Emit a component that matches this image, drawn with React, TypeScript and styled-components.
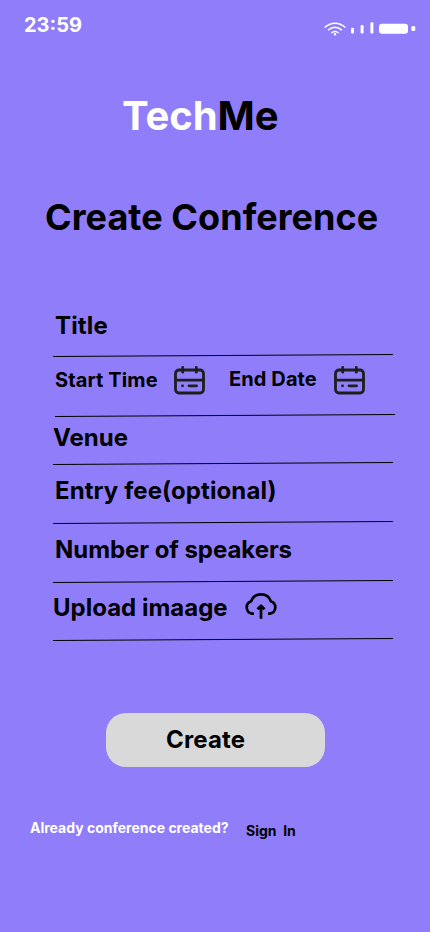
import React from "react";
import styled, { createGlobalStyle } from "styled-components";

const GlobalStyle = createGlobalStyle`
  * { box-sizing: border-box; }
  body { margin: 0; background: #907df9; }
`;

const Screen = styled.main`
  display: flex;
  flex-direction: column;
  width: 430px;
  height: 932px;
  overflow: hidden;
  background: #907df9;
  color: #000;
  font-family: Inter, "Liberation Sans", sans-serif;
  font-weight: 700;
`;

const StatusBar = styled.header`
  display: flex;
  justify-content: space-between;
  align-items: flex-start;
  height: 91px;
  padding: 13px 14px 0 24px;
  color: #fff;
`;

const Clock = styled.time`
  font-size: 20px;
  line-height: 24px;
`;

const StatusIcons = styled.svg`
  width: 92px;
  height: 14px;
  margin-top: 9px;
  fill: #fff;
`;

const Logo = styled.div`
  height: 100px;
  padding-left: 122px;
  font-size: 40px;
  line-height: 50px;
  letter-spacing: -0.08px;

  span { color: #fff; }
`;

const Heading = styled.h1`
  height: 119px;
  margin: 0;
  padding-left: 45px;
  font-size: 36px;
  line-height: 52px;
  letter-spacing: 0.06px;
`;

const Form = styled.form`
  display: flex;
  flex-direction: column;
  margin: 0 0 0 53px;
`;

const Row = styled.div<{ $height: number; $top?: number; $indent?: number }>`
  display: flex;
  flex-direction: column;
  justify-content: space-between;
  height: ${(p) => p.$height}px;
  padding-top: ${(p) => p.$top ?? 0}px;

  & > div { padding-left: ${(p) => p.$indent ?? 0}px; }
`;

const Fields = styled.div`
  display: flex;
  align-items: flex-start;
`;

const Label = styled.label<{ $width?: number; $tracking?: number }>`
  width: ${(p) => (p.$width ? `${p.$width}px` : "auto")};
  font-size: 24px;
  line-height: 30px;
  letter-spacing: ${(p) => p.$tracking ?? 0}px;
  white-space: nowrap;
`;

const DateLabel = styled.label<{ $width: number; $top: number }>`
  width: ${(p) => p.$width}px;
  margin-top: ${(p) => p.$top}px;
  font-size: 20px;
  line-height: 24px;
  letter-spacing: 0.1px;
  white-space: nowrap;
`;

const RuleLine = styled.svg<{ $shift?: number }>`
  flex: none;
  width: 340px;
  height: 3px;
  margin-left: ${(p) => p.$shift ?? 0}px;
  stroke: #000;
`;

const CalendarSvg = styled.svg<{ $gap?: number }>`
  flex: none;
  width: 32px;
  height: 30px;
  margin-right: ${(p) => p.$gap ?? 0}px;
  fill: none;
  stroke: #1e1e1e;
  stroke-width: 2.8;
  stroke-linecap: round;
`;

const CloudSvg = styled.svg`
  width: 34px;
  height: 28px;
  margin-top: -1px;
  fill: none;
  stroke: #000;
  stroke-width: 2.7;
  stroke-linejoin: round;
`;

const CreateButton = styled.button`
  width: 219px;
  height: 54px;
  margin: 72px 0 0 106px;
  padding: 0 0 1px 60px;
  border: 0;
  border-radius: 20px;
  background: #d9d9d9;
  color: #000;
  font: inherit;
  font-size: 24px;
  line-height: 30px;
  letter-spacing: 0.15px;
  text-align: left;
`;

const Footer = styled.footer`
  display: flex;
  margin-top: 52px;
  padding-left: 30px;
  font-size: 14px;
  line-height: 18px;
  white-space: pre;
`;

const Prompt = styled.span`
  width: 216px;
  color: #fff;
`;

const SignIn = styled.a`
  margin-top: 3px;
  color: #000;
`;

const Rule = ({ shift }: { shift?: number }) => (
  <RuleLine $shift={shift} viewBox="0 0 340 3" aria-hidden="true">
    <path d="M0 2.5 340 .5" />
  </RuleLine>
);

const Calendar = ({ gap }: { gap?: number }) => (
  <CalendarSvg $gap={gap} viewBox="0 0 32 30" aria-hidden="true">
    <rect x="2.5" y="5" width="28" height="23" rx="3.5" />
    <path d="M2.5 15.2h28M9.7 2.4v4.8M23.3 2.4v4.8M9.5 20.8h.1M16 20.8h7.6" />
  </CalendarSvg>
);

const CloudUpload = () => (
  <CloudSvg viewBox="0 0 34 28" aria-hidden="true">
    <path d="M10 21.6H8A6.4 6.4 0 0 1 7.2 9.2C8.5 5.2 12.2 2.4 17 2.4s8.5 2.8 9.8 6.8A6.4 6.4 0 0 1 26 21.6h-2M17 26.8V14.4M13.5 17.2 17 13.6l3.5 3.6" />
  </CloudSvg>
);

export default function App() {
  return (
    <Screen>
      <GlobalStyle />
      <StatusBar>
        <Clock>23:59</Clock>
        <StatusIcons viewBox="0 0 92 14" aria-hidden="true">
          <g fill="none" stroke="#fff" strokeWidth="1.5">
            <path d="M.6 5.5Q11-2.8 21.4 5.5M4 8.2Q11 2.3 18 8.2M7.4 10.8Q11 8 14.6 10.8" />
          </g>
          <circle cx="11" cy="12.2" r="1.2" />
          <rect x="27" y="5.7" width="3" height="5.8" rx="1" />
          <rect x="36.6" y="3" width="3" height="8.5" rx="1" />
          <rect x="46.4" y="0.3" width="3" height="11.2" rx="1" />
          <rect x="55" y="1.7" width="29" height="10" rx="3" />
          <rect x="87.3" y="4" width="4" height="5" rx="1.5" />
        </StatusIcons>
      </StatusBar>
      <Logo><span>Tech</span>Me</Logo>
      <Heading>Create Conference</Heading>
      <Form>
        <Row $height={47} $top={1} $indent={2}>
          <Fields><Label $tracking={0.15}>Title</Label></Fields>
          <Rule />
        </Row>
        <Row $height={60} $top={8} $indent={2}>
          <Fields>
            <DateLabel $width={118} $top={3}>Start Time</DateLabel>
            <Calendar gap={24} />
            <DateLabel $width={104} $top={2}>End Date</DateLabel>
            <Calendar />
          </Fields>
          <Rule shift={2} />
        </Row>
        <Row $height={48} $top={6}>
          <Fields><Label>Venue</Label></Fields>
          <Rule />
        </Row>
        <Row $height={59} $top={11} $indent={2}>
          <Fields><Label $tracking={0.09}>Entry fee(optional)</Label></Fields>
          <Rule />
        </Row>
        <Row $height={59} $top={11} $indent={2}>
          <Fields><Label $tracking={-0.05}>Number of speakers</Label></Fields>
          <Rule />
        </Row>
        <Row $height={58} $top={10}>
          <Fields>
            <Label $width={191}>Upload imaage</Label>
            <CloudUpload />
          </Fields>
          <Rule />
        </Row>
      </Form>
      <CreateButton type="button">Create</CreateButton>
      <Footer>
        <Prompt>Already conference created?</Prompt>
        <SignIn>Sign  In</SignIn>
      </Footer>
    </Screen>
  );
}
